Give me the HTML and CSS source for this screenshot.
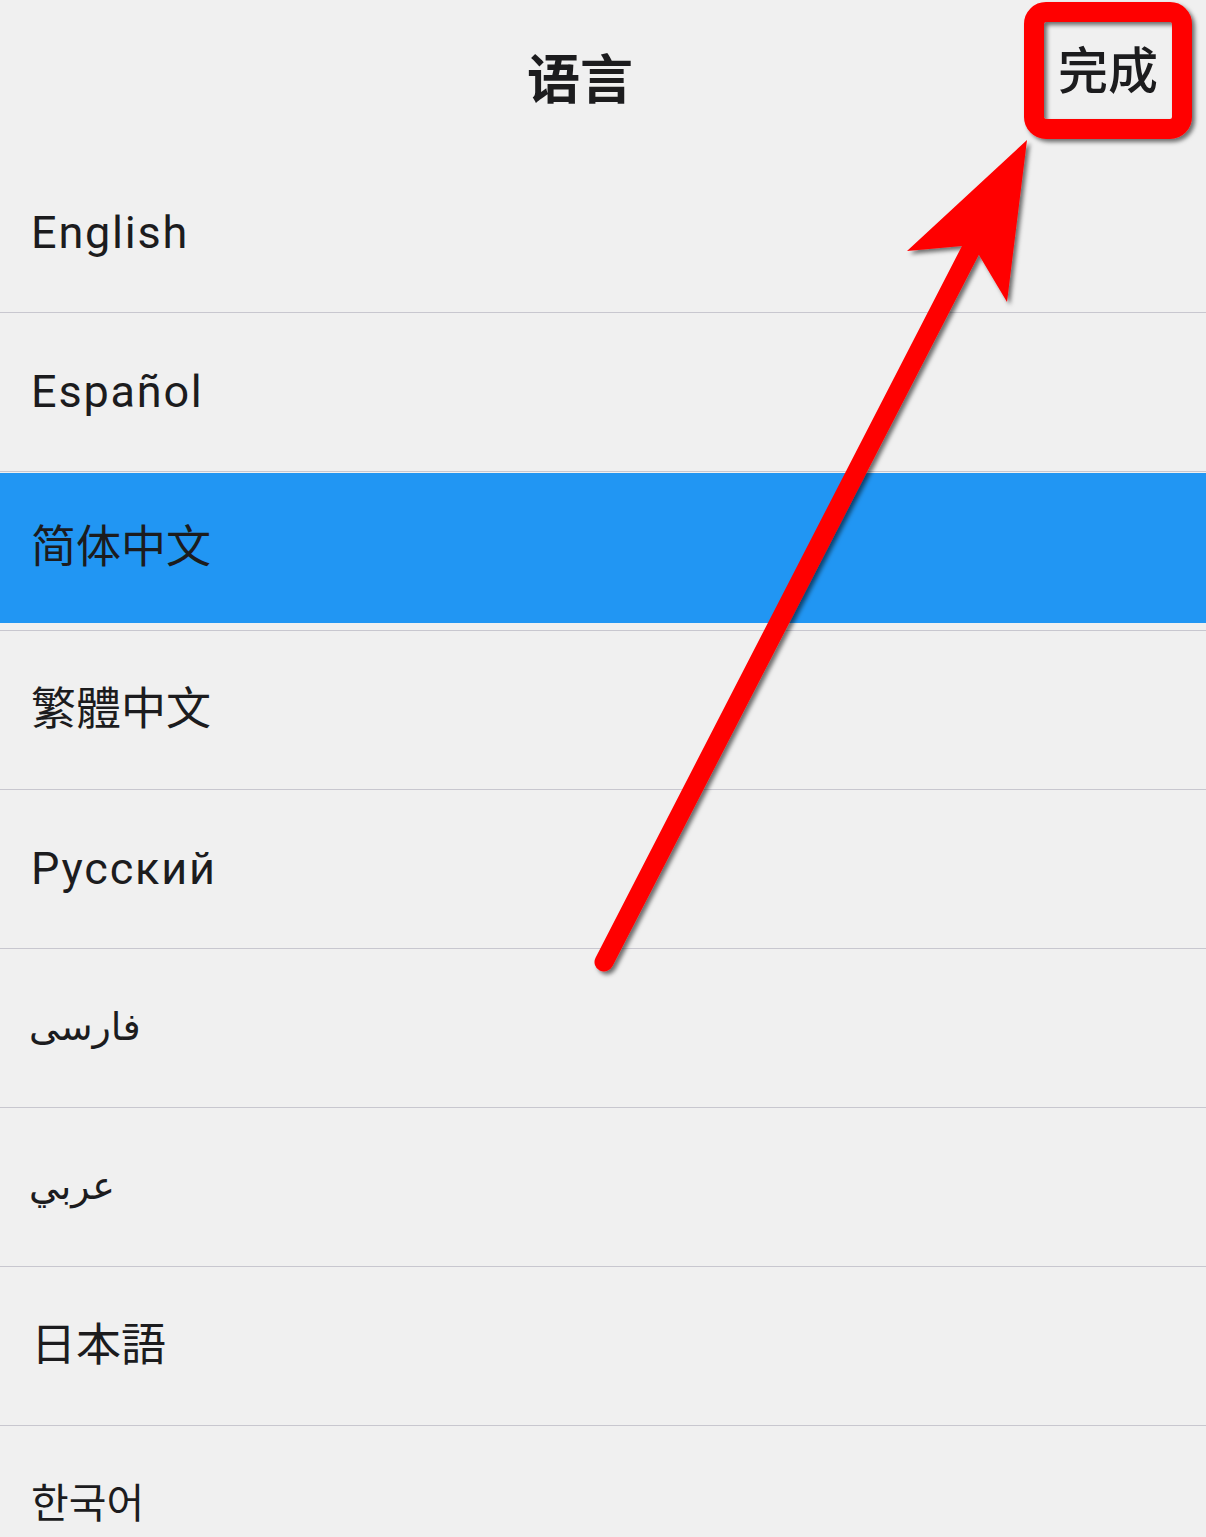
FILE: index.html
```html
<!DOCTYPE html>
<html lang="zh-Hans">
<head>
<meta charset="utf-8">
<title>语言</title>
<link rel="stylesheet" href="styles.css">
</head>
<body>
<div class="screen">
  <header class="nav">
    <span class="nav__side"></span>
    <h1 class="nav__title">语言</h1>
    <button class="nav__done" type="button">完成</button>
  </header>

  <ul class="lang-list">
    <li class="lang-row"><div class="lang-row__body" lang="en">English</div></li>
    <li class="lang-row"><div class="lang-row__body" lang="es">Español</div></li>
    <li class="lang-row lang-row--selected"><div class="lang-row__body lang-row__body--cjk" lang="zh-Hans">简体中文</div></li>
    <li class="lang-row"><div class="lang-row__body lang-row__body--cjk" lang="zh-Hant">繁體中文</div></li>
    <li class="lang-row"><div class="lang-row__body" lang="ru">Русский</div></li>
    <li class="lang-row"><div class="lang-row__body lang-row__body--arabic" lang="fa"><span dir="rtl">فارسی</span></div></li>
    <li class="lang-row"><div class="lang-row__body lang-row__body--arabic" lang="ar"><span dir="rtl">عربي</span></div></li>
    <li class="lang-row"><div class="lang-row__body lang-row__body--cjk" lang="ja">日本語</div></li>
    <li class="lang-row"><div class="lang-row__body lang-row__body--cjk lang-row__body--ko" lang="ko">한국어</div></li>
  </ul>

  <!-- callout: frame round the done button and an arrow pointing at it -->
  <svg class="callout" width="1206" height="1537" viewBox="0 0 1206 1537" aria-hidden="true">
    <defs>
      <filter id="callout-shadow" x="-10%" y="-10%" width="130%" height="130%">
        <feDropShadow dx="3" dy="3" stdDeviation="2.2" flood-color="#000" flood-opacity="0.55"/>
      </filter>
    </defs>
    <g filter="url(#callout-shadow)">
      <rect x="1034" y="12" width="148" height="117" rx="12" ry="12" fill="none" stroke="#ff0000" stroke-width="20"/>
      <line x1="604" y1="962" x2="985" y2="222" stroke="#ff0000" stroke-width="19" stroke-linecap="round"/>
      <polygon points="1027,140 1007,302 979,255 962,246 907,251" fill="#ff0000"/>
    </g>
  </svg>
</div>
</body>
</html>
```

FILE: styles.css
```css
html, body {
  margin: 0;
  padding: 0;
}

body {
  background: #f0f0f0;
  color: #1c1c1e;
  font-family: "Roboto", "Noto Sans CJK SC", sans-serif;
  overflow: hidden;
}

.screen {
  position: relative;
  width: 1206px;
  height: 1537px;
  overflow: hidden;
}

/* navigation bar */
.nav {
  display: grid;
  grid-template-columns: 1fr auto 1fr;
  align-items: center;
  height: 154px;
  padding-right: 46px;
  box-sizing: border-box;
}

.nav__title {
  margin: 0;
  font-family: "Noto Sans CJK SC", sans-serif;
  font-size: 53px;
  font-weight: 700;
  line-height: 1.2;
  color: #1c1c1e;
}

.nav__done {
  justify-self: end;
  margin: 0 2px 21px 0;
  padding: 0;
  border: 0;
  background: none;
  font-family: "Noto Sans CJK SC", sans-serif;
  font-size: 50px;
  font-weight: 500;
  line-height: 1.2;
  color: #1c1c1e;
}

/* language list */
.lang-list {
  list-style: none;
  margin: 0;
  padding: 0;
}

.lang-row {
  display: flex;
  flex-direction: column;
  box-sizing: border-box;
  height: 159px;
  border-bottom: 1px solid #c8c7cf;
}

.lang-row__body {
  flex: 1;
  display: flex;
  align-items: center;
  padding-left: 31px;
  font-size: 45px;
  letter-spacing: 1.8px;
  line-height: 1.2;
}

.lang-row--selected {
  padding: 1px 0 7px;
}

.lang-row--selected .lang-row__body {
  background: #2196f3;
}

/* CJK faces sit low in their line box; lift them to the row's middle */
.lang-row__body--cjk {
  letter-spacing: 0;
  padding-bottom: 9px;
}

.lang-row__body:lang(zh-Hans) {
  font-family: "Noto Sans CJK SC", sans-serif;
}

.lang-row__body:lang(zh-Hant) {
  font-family: "Noto Sans CJK TC", sans-serif;
}

.lang-row__body:lang(ja) {
  font-family: "Noto Sans CJK JP", sans-serif;
}

.lang-row__body--ko {
  font-family: "Noto Sans CJK KR", sans-serif;
  font-size: 41px;
}

.lang-row__body--arabic {
  font-family: "DejaVu Sans", sans-serif;
  font-size: 38px;
  letter-spacing: 0;
  padding-left: 29px;
}

/* annotation overlay */
.callout {
  position: absolute;
  top: 0;
  left: 0;
  pointer-events: none;
}
```
